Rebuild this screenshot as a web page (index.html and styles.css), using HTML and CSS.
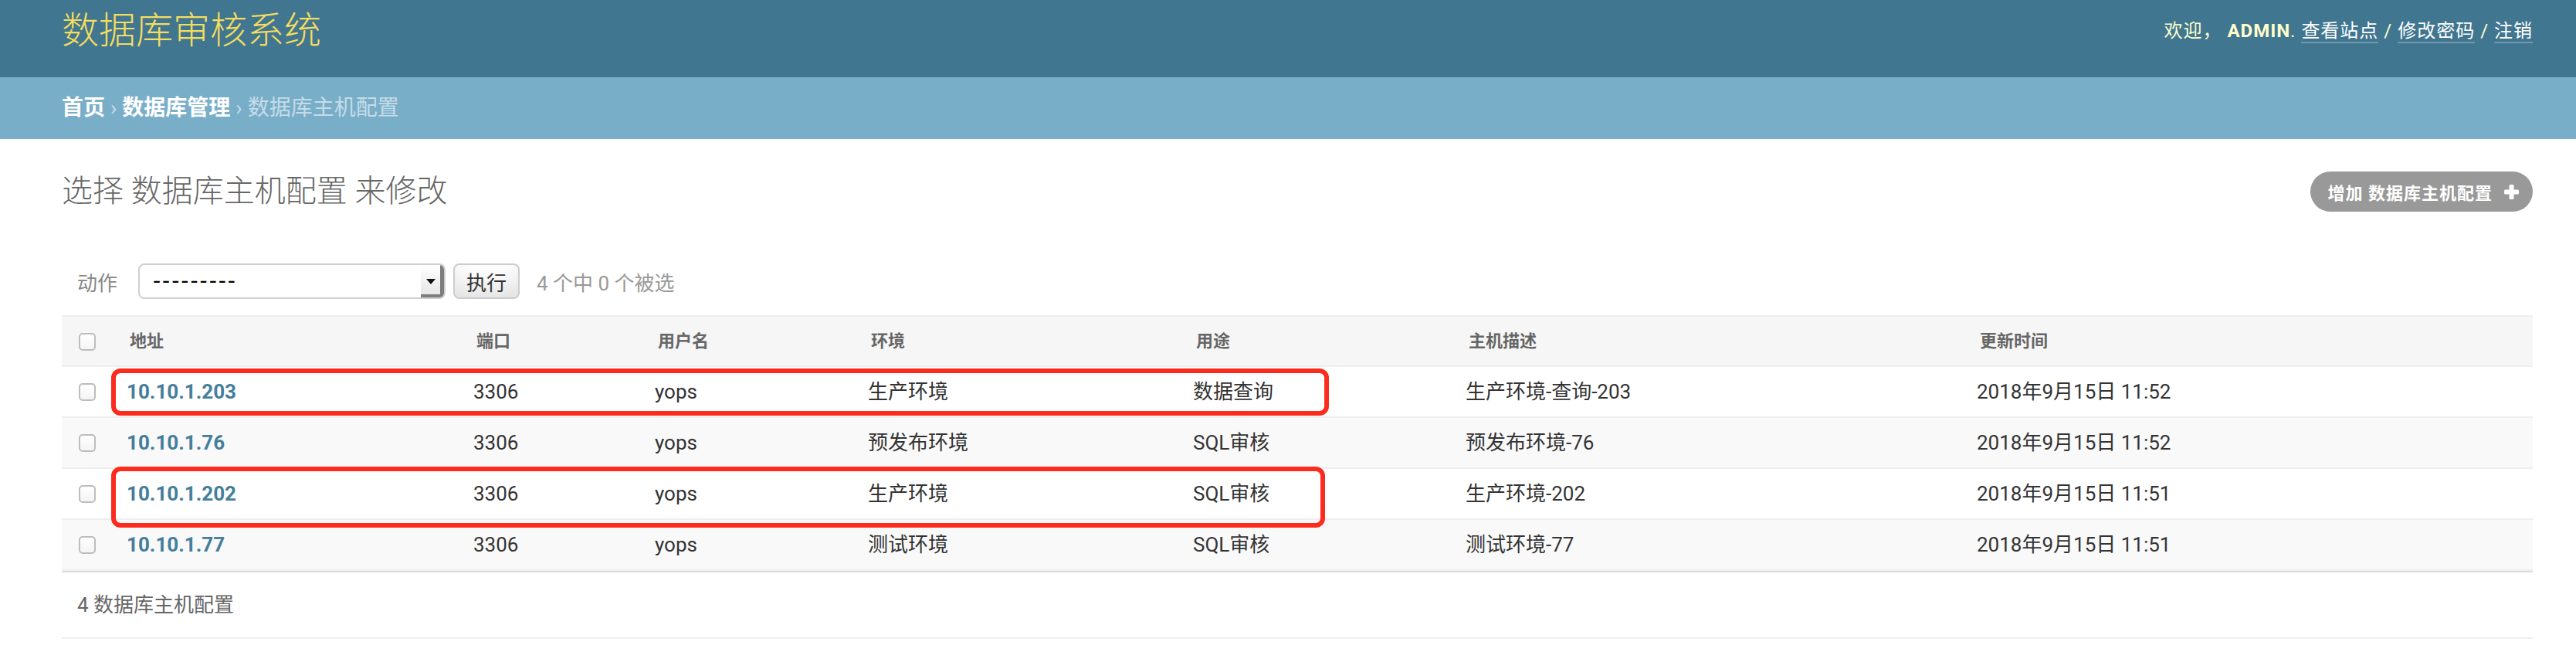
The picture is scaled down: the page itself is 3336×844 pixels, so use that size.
FILE: index.html
```html
<!DOCTYPE html>
<html lang="zh-CN">
<head>
<meta charset="utf-8">
<title>选择 数据库主机配置 来修改 | 数据库审核系统</title>
<link rel="stylesheet" href="styles.css">
</head>
<body>
<header class="header">
  <h1 class="branding">数据库审核系统</h1>
  <div class="user-tools">欢迎， <strong>admin</strong>. <a href="#">查看站点</a> / <a href="#">修改密码</a> / <a href="#">注销</a></div>
</header>
<nav class="breadcrumbs"><a href="#">首页</a> › <a href="#">数据库管理</a> › 数据库主机配置</nav>
<main class="content">
  <div class="title-row">
    <h1 class="page-title">选择 数据库主机配置 来修改</h1>
    <a class="addlink" href="#"><span>增加 数据库主机配置</span><svg class="plus" viewBox="0 0 19 19" width="19" height="19"><rect x="6.5" y="0" width="6" height="19" rx="1.5" fill="#fff"/><rect x="0" y="6.5" width="19" height="6" rx="1.5" fill="#fff"/></svg></a>
  </div>
  <div class="actions">
    <span class="actions-label">动作</span>
    <div class="select">
      <span class="select-value">---------</span>
      <span class="select-arrow"><svg viewBox="0 0 12 7" width="12" height="7"><path d="M0 0h12L6 7z" fill="#111"/></svg></span>
    </div>
    <button class="button" type="button">执行</button>
    <span class="action-counter">4 个中 0 个被选</span>
  </div>
  <div class="results">
    <table class="result-list">
      <colgroup>
        <col class="w-check"><col class="w-host"><col class="w-port"><col class="w-user"><col class="w-env"><col class="w-use"><col class="w-desc"><col class="w-time">
      </colgroup>
      <thead>
        <tr>
          <th class="check"><input type="checkbox" class="cb"></th>
          <th>地址</th>
          <th>端口</th>
          <th>用户名</th>
          <th>环境</th>
          <th>用途</th>
          <th>主机描述</th>
          <th>更新时间</th>
        </tr>
      </thead>
      <tbody>
        <tr class="row1">
          <td class="check"><input type="checkbox" class="cb"></td>
          <th class="host"><a href="#">10.10.1.203</a></th>
          <td>3306</td><td>yops</td><td>生产环境</td><td>数据查询</td><td>生产环境-查询-203</td><td>2018年9月15日 11:52</td>
        </tr>
        <tr class="row2">
          <td class="check"><input type="checkbox" class="cb"></td>
          <th class="host"><a href="#">10.10.1.76</a></th>
          <td>3306</td><td>yops</td><td>预发布环境</td><td>SQL审核</td><td>预发布环境-76</td><td>2018年9月15日 11:52</td>
        </tr>
        <tr class="row1">
          <td class="check"><input type="checkbox" class="cb"></td>
          <th class="host"><a href="#">10.10.1.202</a></th>
          <td>3306</td><td>yops</td><td>生产环境</td><td>SQL审核</td><td>生产环境-202</td><td>2018年9月15日 11:51</td>
        </tr>
        <tr class="row2">
          <td class="check"><input type="checkbox" class="cb"></td>
          <th class="host"><a href="#">10.10.1.77</a></th>
          <td>3306</td><td>yops</td><td>测试环境</td><td>SQL审核</td><td>测试环境-77</td><td>2018年9月15日 11:51</td>
        </tr>
      </tbody>
    </table>
    <div class="mark mark-first"></div>
    <div class="mark mark-second"></div>
  </div>
  <p class="paginator">4 数据库主机配置</p>
</main>
</body>
</html>
```
FILE: styles.css
```css
* { box-sizing: border-box; }
html, body { margin: 0; padding: 0; }
body {
  font-family: Roboto, "Noto Sans CJK SC", sans-serif;
  color: #333;
  background: #fff;
  font-size: 26px;
}
a { text-decoration: none; }

/* header */
.header {
  display: flex;
  justify-content: space-between;
  align-items: center;
  height: 100px;
  padding: 0 56px 20px 80px;
  background: #417690;
  color: #ffc;
}
.branding {
  margin: 0;
  font-size: 48px;
  font-weight: 300;
  line-height: 80px;
  color: #f5dd5d;
}
.user-tools {
  font-size: 24px;
  line-height: 80px;
  letter-spacing: 1px;
  text-transform: uppercase;
  font-weight: 400;
}
.user-tools strong { font-weight: 700; }
.user-tools a {
  color: #fff;
  border-bottom: 2px solid rgba(255, 255, 255, 0.25);
}

/* breadcrumbs */
.breadcrumbs {
  background: #79aec8;
  padding: 20px 56px 20px 80px;
  font-size: 28px;
  line-height: 40px;
  color: #c4dce8;
}
.breadcrumbs a { color: #fff; font-weight: 700; }

/* content */
.content { padding: 40px 56px 0 80px; }
.title-row {
  display: flex;
  justify-content: space-between;
  align-items: center;
  height: 56px;
  margin-bottom: 44px;
}
.page-title {
  margin: 0;
  font-size: 40px;
  font-weight: 300;
  line-height: 56px;
  color: #666;
}
.addlink {
  display: inline-flex;
  align-items: center;
  gap: 15px;
  height: 52px;
  padding: 0 18px 0 23px;
  border-radius: 26px;
  background: #999;
  color: #fff;
  font-size: 22px;
  font-weight: 700;
  letter-spacing: 1px;
  text-transform: uppercase;
}
.plus { display: block; }

/* actions */
.actions {
  display: flex;
  align-items: center;
  height: 88px;
  padding: 20px;
  color: #999;
  font-size: 26px;
}
.actions-label { color: #888; }
.select {
  display: flex;
  align-items: stretch;
  width: 398px;
  height: 46px;
  margin-left: 27px;
  border: 2px solid #cfcfcf;
  border-radius: 8px;
  background: #fff;
  overflow: hidden;
}
.select-value {
  flex: 1;
  padding-left: 17px;
  font-family: "DejaVu Sans", sans-serif;
  font-size: 28px;
  line-height: 42px;
  letter-spacing: 2px;
  color: #000;
}
.select-arrow {
  display: flex;
  align-items: center;
  justify-content: center;
  width: 30px;
  padding-right: 4px;
  background: linear-gradient(#ffffff, #e4e4e4);
  box-shadow: inset -5px -4px 0 #7d7d7d;
}
.button {
  height: 46px;
  margin-left: 10px;
  padding: 0 15px;
  border: 2px solid #ccc;
  border-radius: 8px;
  background: #fff;
  box-shadow: inset 0 -30px 40px -20px rgba(0, 0, 0, 0.15);
  font-family: Roboto, "Noto Sans CJK SC", sans-serif;
  font-size: 26px;
  color: #333;
}
.action-counter { margin-left: 22px; color: #999; }

/* results table */
.results { position: relative; }
.result-list {
  width: 100%;
  table-layout: fixed;
  border-collapse: separate;
  border-spacing: 0;
}
.w-check { width: 68px; }
.w-host { width: 449px; }
.w-port { width: 235px; }
.w-user { width: 276px; }
.w-env { width: 421px; }
.w-use { width: 353px; }
.w-desc { width: 662px; }
.w-time { width: 736px; }

.result-list thead th {
  background: #f6f6f6;
  border-top: 2px solid #eee;
  border-bottom: 2px solid #eee;
  padding: 16px 20px 15px;
  font-size: 22px;
  line-height: 32px;
  font-weight: 700;
  color: #666;
  text-align: left;
  vertical-align: middle;
  white-space: nowrap;
}
.result-list td,
.result-list tbody th {
  padding: 16px;
  font-size: 26px;
  line-height: 32px;
  border-bottom: 2px solid #eee;
  text-align: left;
  vertical-align: middle;
  white-space: nowrap;
  font-weight: 400;
  color: #333;
}
.result-list tbody th.host a { color: #447e9b; font-weight: 700; }
.result-list .check,
.result-list thead th.check { padding-left: 16px; padding-right: 0; }
.row1 { background: #fff; }
.row2 { background: #f9f9f9; }

.cb {
  -webkit-appearance: none;
  appearance: none;
  display: block;
  width: 22px;
  height: 23px;
  margin: 0 0 0 6px;
  border: 2px solid #bdbdbd;
  border-radius: 5px;
  background: linear-gradient(#ffffff, #f4f4f4);
}

/* red annotation marks over rows */
.mark {
  position: absolute;
  left: 64px;
  border: 6px solid #fb2b1e;
  border-radius: 12px;
  pointer-events: none;
}
.mark-first { top: 69px; width: 1577px; height: 61px; }
.mark-second { top: 196px; width: 1572px; height: 79px; }

/* paginator */
.paginator {
  margin: 0;
  padding: 20px;
  font-size: 26px;
  line-height: 44px;
  color: #666;
  border-top: 2px solid #ddd;
  border-bottom: 2px solid #eee;
}
```
